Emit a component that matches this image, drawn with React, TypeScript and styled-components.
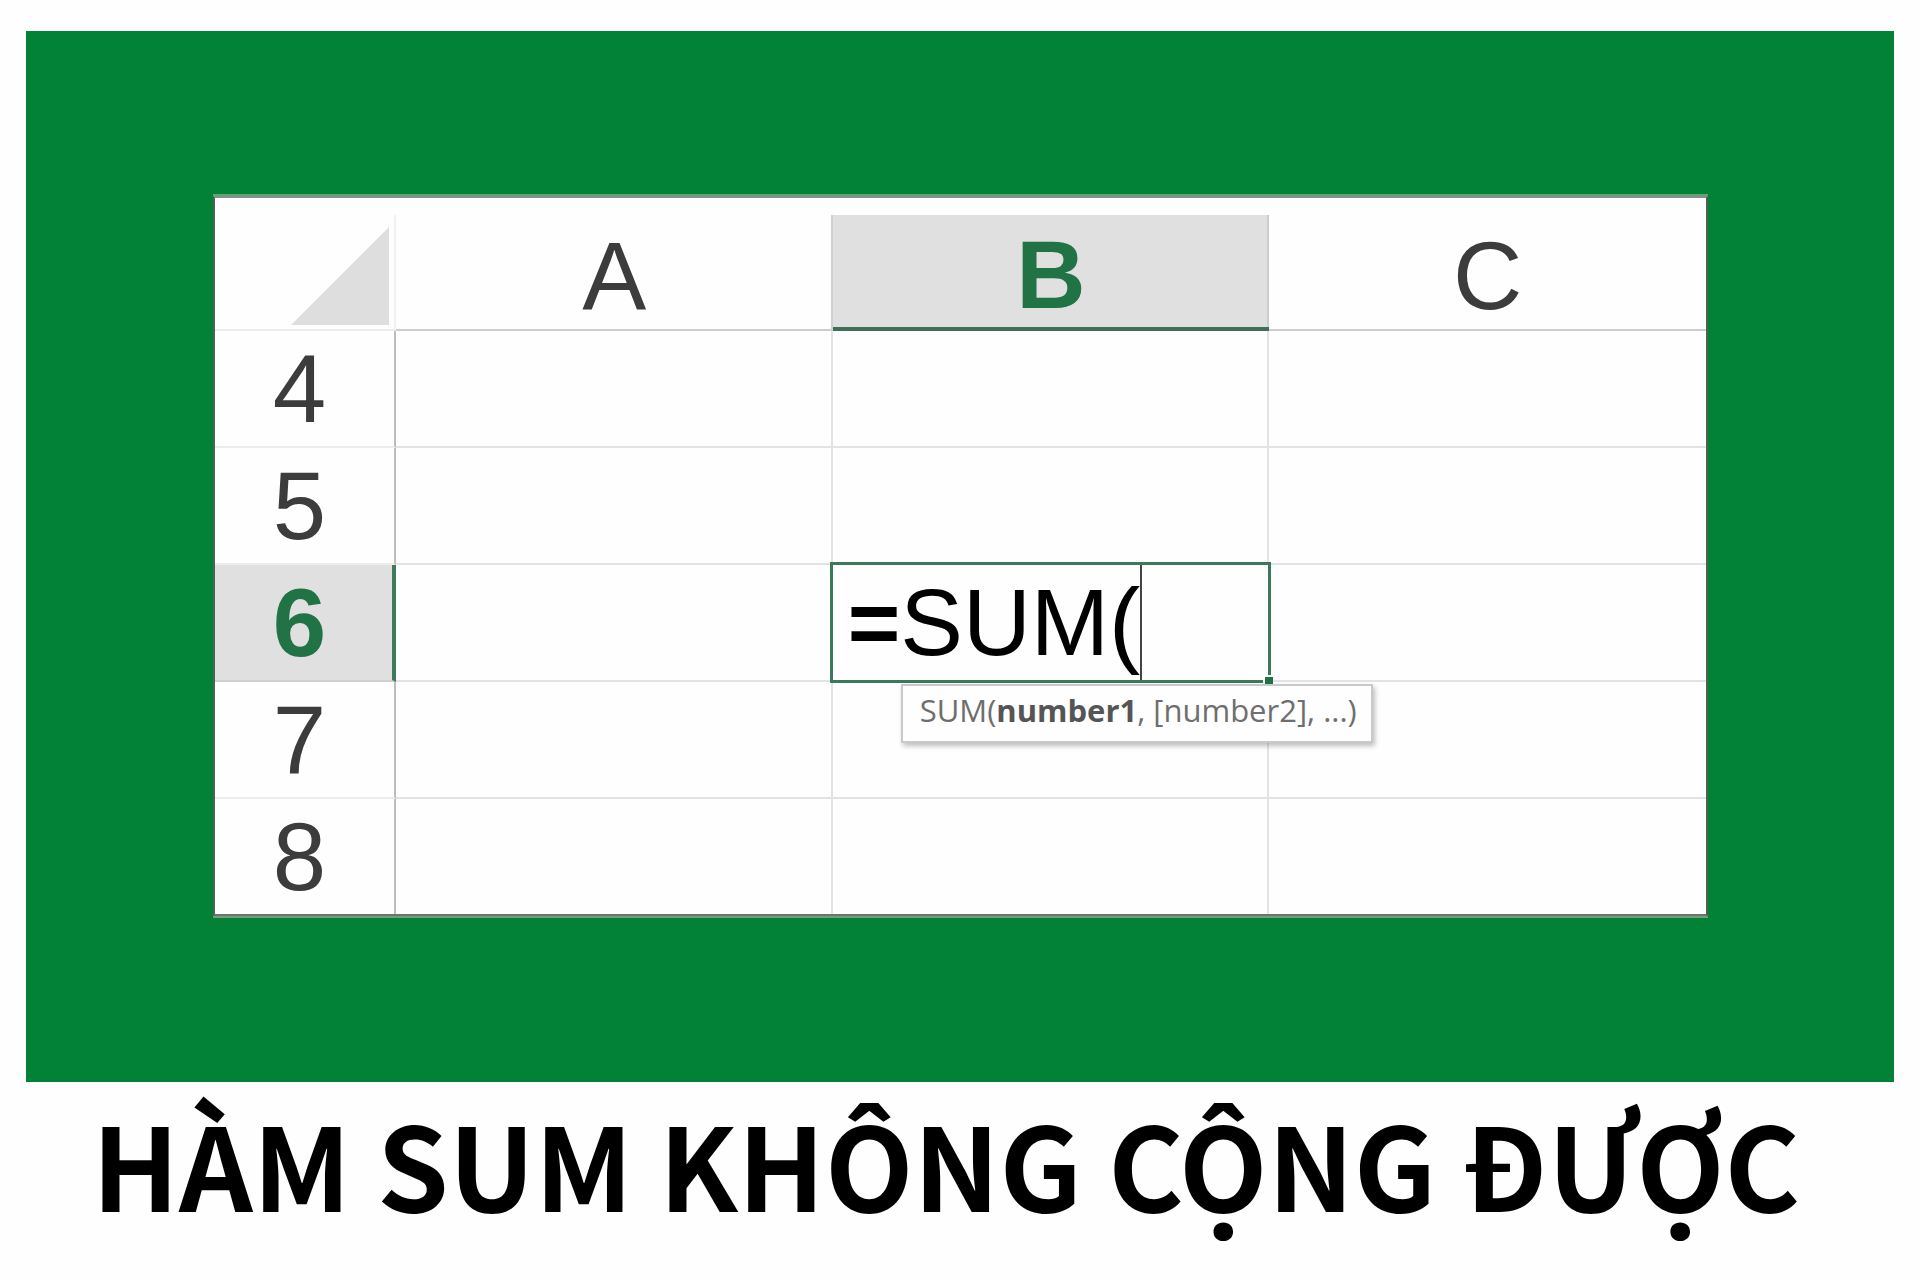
import React, { useState } from "react";
import styled, { createGlobalStyle } from "styled-components";

const GlobalStyle = createGlobalStyle`
  *, *::before, *::after { box-sizing: border-box; }
  body { margin: 0; background: #fefefe; }
`;

const Page = styled.main`
  padding: 31px 26px 0;
  font-family: "Liberation Sans", Arial, sans-serif;
`;

const Panel = styled.section`
  padding: 165px 186px 166px 187px;
  background: #028236;
`;

const Sheet = styled.div`
  padding-top: 17px;
  background: #fefefe;
  border: 2px solid #4f6152;
  border-top-color: #8b8d8b;
  border-bottom-color: #6c756c;
  box-shadow: 0 -2px 0 #5fa377, 0 2px 0 #7b9a7c;
`;

const Grid = styled.table`
  width: 100%;
  table-layout: fixed;
  border-collapse: separate;
  border-spacing: 0;
  font-size: 96px;
  line-height: 104px;
  color: #3c3c3c;
`;

const RowHeadCol = styled.col`
  width: 181px;
`;

const Corner = styled.th`
  height: 115px;
  padding: 0 5px 4px 0;
  vertical-align: bottom;
  border-right: 2px solid #f1f1f1;
  border-bottom: 2px solid #ececec;
`;

const CornerMark = styled.svg`
  display: block;
  width: 98px;
  height: 98px;
  margin-left: auto;
  fill: #dedede;
`;

const ColHead = styled.th<{ $active?: boolean }>`
  height: 116px;
  padding: 8px 0 0;
  font-weight: ${(p) => (p.$active ? 700 : 400)};
  color: ${(p) => (p.$active ? "#217346" : "inherit")};
  background: ${(p) => (p.$active ? "#e0e0e0" : "transparent")};
  border-bottom: ${(p) => (p.$active ? "4px solid #3f6f57" : "2px solid #cdcdcd")};
  box-shadow: ${(p) => (p.$active ? "inset -2px 0 0 #cccccc, -2px 0 0 #d0d0d0" : "none")};
`;

const RowHead = styled.th<{ $active?: boolean }>`
  height: 117px;
  padding: 0 ${(p) => (p.$active ? 8 : 10)}px 0 0;
  font-weight: ${(p) => (p.$active ? 700 : 400)};
  color: ${(p) => (p.$active ? "#217346" : "inherit")};
  background: ${(p) => (p.$active ? "#e0e0e0" : "transparent")};
  border-right: ${(p) => (p.$active ? "4px solid #3f7a5c" : "2px solid #bdbdbd")};
  border-bottom: 2px solid ${(p) => (p.$active ? "#cfcfcf" : "#ededed")};

  tr:last-child > & {
    height: 115px;
    border-bottom: 0;
  }
`;

const Cell = styled.td`
  position: relative;
  padding: 0;
  border-right: 2px solid #e3e3e3;
  border-bottom: 2px solid #e3e3e3;

  &:last-child { border-right: 0; }
  tr:last-child > & { border-bottom: 0; }
`;

const Editor = styled.div`
  position: absolute;
  z-index: 1;
  inset: -3px -4px -3px -3px;
  display: flex;
  align-items: stretch;
  padding-left: 15px;
  background: #fefefe;
  border: 3px solid #3a7a5a;
  color: #000;
`;

const EqualSign = styled.label`
  display: flex;
  align-items: center;
  font-size: 90px;
  font-weight: 700;
`;

const FormulaInput = styled.input`
  field-sizing: content;
  min-width: 0;
  padding: 0;
  font: inherit;
  font-size: 94px;
  color: inherit;
  background: none;
  border: 0;
  border-right: 2px solid #444;
  border-radius: 0;
  outline: 0;
`;

const FillHandle = styled.span`
  position: absolute;
  right: -5px;
  bottom: -5px;
  width: 10px;
  height: 10px;
  background: #217346;
  border: 2px solid #fefefe;
  border-width: 2px 0 0 2px;
`;

const Hint = styled.div`
  position: absolute;
  z-index: 2;
  top: 119px;
  left: 68px;
  padding: 3px 14px 9px 17px;
  font-family: "Open Sans", "Noto Sans", sans-serif;
  font-size: 31px;
  line-height: 43px;
  white-space: nowrap;
  color: #6e6e6e;
  background: #fefefe;
  border: 2px solid #c9c9c9;
  box-shadow: 2px 3px 5px rgba(0, 0, 0, 0.25);

  strong { color: #555; }
`;

const Title = styled.h1`
  margin: 0;
  padding: 0 66px;
  font-family: "Noto Sans CJK SC", "Open Sans", sans-serif;
  font-size: 115px;
  font-weight: 700;
  line-height: 160px;
  white-space: nowrap;
  color: #000;
`;

const columns = ["A", "B", "C"];
const rows = [4, 5, 6, 7, 8];
const active = { column: "B", row: 6 };

function ActiveEditor() {
  const [formula, setFormula] = useState("SUM(");
  return (
    <>
      <Editor>
        <EqualSign htmlFor="formula">=</EqualSign>
        <FormulaInput id="formula" value={formula} onChange={(e) => setFormula(e.target.value)} />
        <FillHandle />
      </Editor>
      <Hint role="tooltip">
        SUM(<strong>number1</strong>, [number2], ...)
      </Hint>
    </>
  );
}

export default function App() {
  return (
    <Page>
      <GlobalStyle />
      <Panel>
        <Sheet>
          <Grid>
            <colgroup>
              <RowHeadCol />
              {columns.map((c) => <col key={c} />)}
            </colgroup>
            <thead>
              <tr>
                <Corner>
                  <CornerMark viewBox="0 0 98 98" aria-hidden="true">
                    <path d="M98 0V98H0Z" />
                  </CornerMark>
                </Corner>
                {columns.map((c) => (
                  <ColHead key={c} scope="col" $active={c === active.column}>{c}</ColHead>
                ))}
              </tr>
            </thead>
            <tbody>
              {rows.map((r) => (
                <tr key={r}>
                  <RowHead scope="row" $active={r === active.row}>{r}</RowHead>
                  {columns.map((c) => (
                    <Cell key={c}>
                      {r === active.row && c === active.column && <ActiveEditor />}
                    </Cell>
                  ))}
                </tr>
              ))}
            </tbody>
          </Grid>
        </Sheet>
      </Panel>
      <Title>HÀM SUM KHÔNG CỘNG ĐƯỢC</Title>
    </Page>
  );
}
